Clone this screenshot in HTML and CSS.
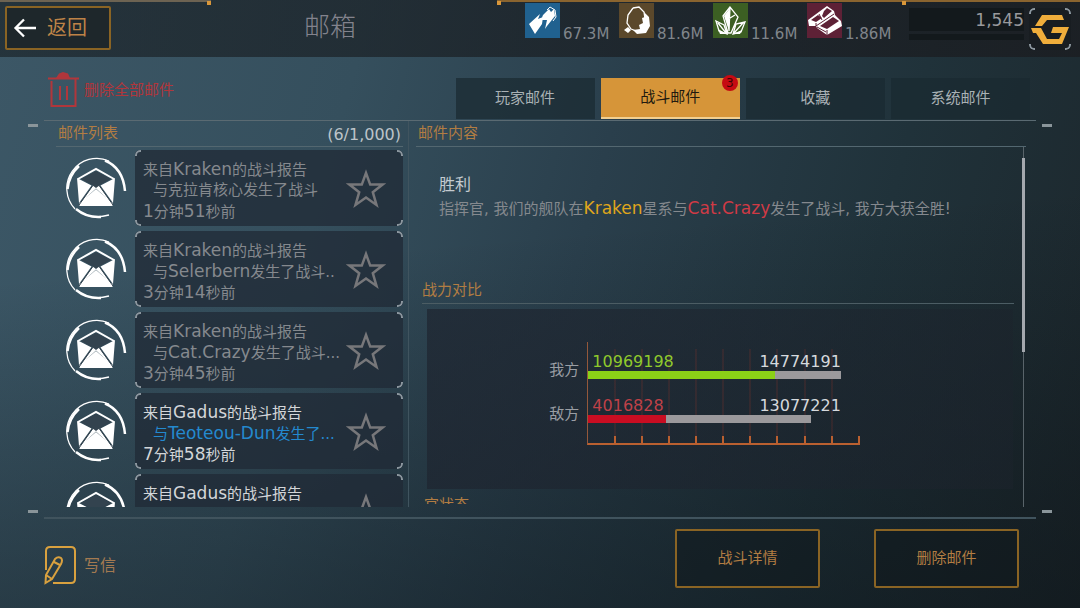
FILE: index.html
```html
<!DOCTYPE html>
<html lang="zh-CN">
<head>
  <meta charset="UTF-8">
  <meta name="viewport" content="width=device-width, initial-scale=1.0">
  <title>邮箱</title>
  <link rel="stylesheet" href="styles.css">
</head>
<body>
  <!-- Shared icons -->
  <svg class="sprite" width="0" height="0" aria-hidden="true">
    <symbol id="icon-mail" viewBox="0 0 62 62">
      <path d="M44 4A30 30 0 0 0 10 52M14 54Q26 63 44 58" fill="none" stroke="currentColor" stroke-width="1.300"/>
      <path d="M40 3.500Q58 11 60 34" fill="none" stroke="currentColor" stroke-width="2.500"/>
      <path d="M14 9Q4 18 2.500 32M11 52Q22 61 36 60" fill="none" stroke="currentColor" stroke-width="2.500"/>
      <path d="M13 22L31 12L49 22" fill="none" stroke="currentColor" stroke-width="2"/>
      <path d="M12 21L26.500 28.500L14 46ZM50 21L35.500 28.500L48 46ZM31 32L47.500 46V49H14.500V46ZM28 28.500H34L45 44L31 31.500L17 44Z" fill="currentColor"/>
      <path d="M14 48L27.500 29M48 48L34.500 29" stroke="#33434f" stroke-width="1"/>
      <path d="M16 22L31 14L46 22L35 28L31 31L27 28Z" fill="#33434f"/>
    </symbol>
    <symbol id="icon-star" viewBox="0 0 40 40">
      <path d="M20 4L24.200 15.600H36.500L26.800 23.200L30.500 36L20 28.500L9.500 36L13.200 23.200L3.500 15.600H15.800Z" fill="none" stroke="currentColor" stroke-width="2.500"/>
    </symbol>
  </svg>

  <!-- Top decoration -->
  <div class="top-line">
    <span class="seg seg-left"></span>
    <span class="seg seg-mid"></span>
    <span class="seg seg-right"></span>
  </div>

  <!-- Header -->
  <header class="header">
    <button class="back-btn">
      <svg width="24" height="20" viewBox="0 0 24 20" fill="none" stroke="#fff" stroke-width="2.300"><path d="M11 1.500L2.500 10L11 18.500M2 10H23"/></svg>
      返回
    </button>
    <h1 class="title">邮箱</h1>

    <ul class="resources">
      <li class="resource">
        <svg class="energy" viewBox="0 0 35 35">
          <path d="M4 21L15 11L13 16L18 14L17 21L10 31ZM18 12L24 6L26 9L29 6L30 13L22 23L20 26L22 17H16Z" fill="#fff"/>
          <path d="M22 7L25 4L30 7L31 14L28 18" fill="none" stroke="#fff"/>
        </svg>
        <span>67.3M</span>
      </li>
      <li class="resource">
        <svg class="ore" viewBox="0 0 35 35">
          <path d="M14 5L20 4L25 9L26 16M12 26L8 20L9 12L14 5M12 26L20 29" fill="none" stroke="#fff" stroke-width="1.300"/>
          <path d="M25 9L30 14L31 23L27 30L18 31L14 27L21 26L20 22L24 20L23 15L26 14ZM5 27L9 24L12 27L9 30Z" fill="#fff"/>
        </svg>
        <span>81.6M</span>
      </li>
      <li class="resource">
        <svg class="crystal" viewBox="0 0 35 35">
          <path d="M17 4L10 13L15 30H18L25 14ZM17 4L16 28M12 13L17 15L22 12M3 18L11 22L14 31L6 28ZM32 19L23 21L20 31L28 29ZM5 20L13 30M30 20L21 30" fill="none" stroke="#fff" stroke-width="1.300"/>
          <path d="M17 5L11 13L16 28ZM5 26L14 31H7ZM29 27L20 31H27Z" fill="#fff"/>
        </svg>
        <span>11.6M</span>
      </li>
      <li class="resource">
        <svg class="alloy" viewBox="0 0 35 35">
          <path d="M1 17L20 3L27 8L28 12L34 18L35 23L20 32L10 25L9 23L2 23Z" fill="#fff"/>
          <path d="M4 17L11 12L15 15L9 19ZM17 8L20 5L25 8L17 15L15 13ZM13 23L26 14L32 18L20 26Z" fill="#5e2136"/>
          <path d="M9 20V23L27 11M20 27V32M12 11L15 17M10 24L19 29" fill="none" stroke="#5e2136" stroke-width="1"/>
        </svg>
        <span>1.86M</span>
      </li>
    </ul>

    <div class="gold">
      <span class="gold-value">1,545</span>
      <span class="gold-track"></span>
    </div>
    <button class="gold-btn brackets" aria-label="金币">
      <svg width="42" height="42" viewBox="0 0 42 42" fill="#efad3b"><path d="M6 18L13 7H33L35 12H18L13 18ZM2 20H12L18 31H30L33 25H22L24 19H40L33 36H14L7 25H4Z"/></svg>
    </button>
  </header>

  <main class="mailbox">
    <!-- Delete all + tabs -->
    <div class="toolbar">
      <button class="delete-all">
        <svg width="32" height="38" viewBox="0 0 32 38" fill="none" stroke="currentColor" stroke-width="2"><path d="M0 7.500H31M3.500 10V35H27.500V8M12 15V29M19 15V29"/><path d="M8 7L11 2.500L15 1L20 2.500L22 7Z" fill="currentColor" stroke="none"/></svg>
        删除全部邮件
      </button>
      <nav class="tabs">
        <button class="tab">玩家邮件</button>
        <button class="tab active">战斗邮件<span class="badge">3</span></button>
        <button class="tab">收藏</button>
        <button class="tab">系统邮件</button>
      </nav>
    </div>

    <div class="frame">
      <div class="marks"><i></i><i></i></div>

      <!-- Mail list -->
      <section class="list-panel">
        <div class="panel-head">
          <h2>邮件列表</h2>
          <span class="count">(6/1,000)</span>
        </div>
        <ul class="mail-list">
          <li class="mail">
            <svg class="mail-icon"><use href="#icon-mail"/></svg>
            <div class="card brackets">
              <a class="card-text" href="#">
                <span>来自<b>Kraken</b>的战斗报告</span>
                <span class="sub">与克拉肯核心发生了战斗</span>
                <span><b>1</b>分钟<b>51</b>秒前</span>
              </a>
              <button class="star" aria-label="收藏"><svg width="40" height="40"><use href="#icon-star"/></svg></button>
            </div>
          </li>
          <li class="mail">
            <svg class="mail-icon"><use href="#icon-mail"/></svg>
            <div class="card brackets">
              <a class="card-text" href="#">
                <span>来自<b>Kraken</b>的战斗报告</span>
                <span class="sub">与<b>Selerbern</b>发生了战斗..</span>
                <span><b>3</b>分钟<b>14</b>秒前</span>
              </a>
              <button class="star" aria-label="收藏"><svg width="40" height="40"><use href="#icon-star"/></svg></button>
            </div>
          </li>
          <li class="mail">
            <svg class="mail-icon"><use href="#icon-mail"/></svg>
            <div class="card brackets">
              <a class="card-text" href="#">
                <span>来自<b>Kraken</b>的战斗报告</span>
                <span class="sub">与<b>Cat.Crazy</b>发生了战斗...</span>
                <span><b>3</b>分钟<b>45</b>秒前</span>
              </a>
              <button class="star" aria-label="收藏"><svg width="40" height="40"><use href="#icon-star"/></svg></button>
            </div>
          </li>
          <li class="mail unread">
            <svg class="mail-icon"><use href="#icon-mail"/></svg>
            <div class="card brackets">
              <a class="card-text" href="#">
                <span>来自<b>Gadus</b>的战斗报告</span>
                <span class="sub">与<b>Teoteou-Dun</b>发生了...</span>
                <span><b>7</b>分钟<b>58</b>秒前</span>
              </a>
              <button class="star" aria-label="收藏"><svg width="40" height="40"><use href="#icon-star"/></svg></button>
            </div>
          </li>
          <li class="mail unread">
            <svg class="mail-icon"><use href="#icon-mail"/></svg>
            <div class="card brackets">
              <a class="card-text" href="#">
                <span>来自<b>Gadus</b>的战斗报告</span>
              </a>
              <button class="star" aria-label="收藏"><svg width="40" height="40"><use href="#icon-star"/></svg></button>
            </div>
          </li>
        </ul>
      </section>

      <!-- Mail content -->
      <section class="content-panel">
        <div class="panel-head">
          <h2>邮件内容</h2>
        </div>
        <div class="content-row">
          <div class="content">
            <article class="report">
              <h3>胜利</h3>
              <p>指挥官, 我们的舰队在<b class="place">Kraken</b>星系与<b class="foe">Cat.Crazy</b>发生了战斗, 我方大获全胜!</p>
            </article>
            <h2 class="section-title">战力对比</h2>
            <div class="chart">
              <div class="chart-labels">
                <span>我方</span>
                <span>敌方</span>
              </div>
              <div class="plot">
                <div class="bar-row ours">
                  <div class="values"><span>10969198</span><span>14774191</span></div>
                  <div class="bar" style="width: 93%"><i style="width: 74%"></i></div>
                </div>
                <div class="bar-row enemy">
                  <div class="values"><span>4016828</span><span>13077221</span></div>
                  <div class="bar" style="width: 82%"><i style="width: 35%"></i></div>
                </div>
                <div class="ticks"><i></i><i></i><i></i><i></i><i></i><i></i><i></i><i></i><i></i><i></i></div>
              </div>
            </div>
            <h2 class="section-next">官状态</h2>
          </div>
          <div class="scrollbar"><div class="thumb"></div></div>
        </div>
      </section>

      <div class="marks"><i></i><i></i></div>
    </div>

    <!-- Bottom actions -->
    <footer class="footer">
      <button class="write-btn">
        <svg width="34" height="40" viewBox="0 0 34 40" fill="none" stroke="#d9a13f" stroke-width="2"><path d="M2 25V6Q2 2 6 2H27Q31 2 31 6V34Q31 38 27 38H9"/><path d="M1.500 38L2 30L11 14Q14 11 17 13Q19 15 17 19L8 34ZM10 17L16 20M2 30L8 34"/></svg>
        写信
      </button>
      <div class="actions">
        <button class="action-btn">战斗详情</button>
        <button class="action-btn">删除邮件</button>
      </div>
    </footer>
  </main>
</body>
</html>
```
FILE: styles.css
```css
/* General Styling */
* {
  box-sizing: border-box;
}

body {
  margin: 0;
  height: 100vh;
  display: flex;
  flex-direction: column;
  overflow: hidden;
  font-family: "DejaVu Sans", "Noto Sans CJK SC", sans-serif;
  font-size: 15px;
  line-height: 21px;
  color: #85898e;
  background: linear-gradient(175deg, rgba(8, 14, 18, 0) 40%, rgba(8, 14, 18, 0.45)), linear-gradient(105deg, #3c5766 0%, #354f5d 30%, #2a3f4c 52%, #20323a 76%, #1c262b 100%);
}

h1, h2, h3, p, ul {
  margin: 0;
  padding: 0;
  font-weight: normal;
  list-style: none;
}

/* Names and numbers, set a little larger than the Chinese text */
b {
  font-size: 17px;
  font-weight: normal;
  line-height: 20px;
}

button {
  font: inherit;
  color: inherit;
  background: none;
  border: none;
  padding: 0;
  cursor: pointer;
}

a {
  color: inherit;
  text-decoration: none;
}

svg {
  display: block;
  flex: none;
}

.sprite {
  position: absolute;
}

/* Corner brackets */
.brackets {
  position: relative;
}

.brackets::before {
  content: "";
  position: absolute;
  inset: 0;
  border: 2px solid #8b969e;
  border-radius: 5px;
  pointer-events: none;
  -webkit-mask: linear-gradient(#000 0 0) 0 0 / 6px 6px no-repeat, linear-gradient(#000 0 0) 100% 0 / 6px 6px no-repeat, linear-gradient(#000 0 0) 0 100% / 6px 6px no-repeat, linear-gradient(#000 0 0) 100% 100% / 6px 6px no-repeat;
}

/* Top decoration */
.top-line {
  display: flex;
  height: 4px;
  margin-bottom: -4px;
  z-index: 1;
}

.seg {
  border-top: 2px solid #8a642f;
  display: flex;
}

.seg::before, .seg-left::after {
  content: "";
  width: 4px;
  height: 4px;
  margin-top: -1px;
  background: #d9973a;
}

.seg-left {
  width: 19.5%;
  margin-right: 26.5%;
  border-color: #6d6352;
  justify-content: flex-end;
}

.seg-left::before {
  display: none;
}

.seg-mid {
  width: 37.5%;
}

.seg-right {
  flex: 1;
}

/* Header */
.header {
  display: flex;
  align-items: flex-start;
  height: 57px;
  padding: 3px 9px 0 5px;
  background: linear-gradient(90deg, rgba(22, 28, 32, 0.6), rgba(27, 28, 32, 0.75));
}

.back-btn {
  display: flex;
  align-items: center;
  gap: 10px;
  width: 106px;
  height: 44px;
  margin-top: 3px;
  padding-left: 6px;
  border: 2px solid #8a6424;
  border-radius: 2px;
  background: #1e272b;
  color: #bd8347;
  font-size: 20px;
}

.title {
  flex: 1;
  padding-left: 24px;
  text-align: center;
  font-size: 26px;
  font-weight: 300;
  line-height: 48px;
  color: #83838d;
}

.resources {
  display: flex;
  margin-right: 8px;
}

.resource {
  display: flex;
  align-items: flex-end;
  gap: 3px;
  width: 94px;
  color: #80858b;
}

.resource svg {
  width: 35px;
  height: 35px;
}

.resource span {
  line-height: 17px;
  margin-bottom: -5px;
}

.energy {
  background: #20618f;
}

.ore {
  background: #5b482b;
}

.crystal {
  background: #3c5f23;
}

.alloy {
  background: #5e2136;
}

.gold {
  display: flex;
  flex-direction: column;
  gap: 3px;
  width: 115px;
  margin-top: 5px;
}

.gold-value {
  height: 23px;
  background: #13191c;
  color: #999a9d;
  font-size: 17px;
  line-height: 24px;
  text-align: right;
}

.gold-track {
  height: 6px;
  background: #13191c;
}

.gold-btn {
  width: 42px;
  height: 42px;
  margin: 5px 0 0 5px;
  background: #181d21;
}

/* Mailbox */
.mailbox {
  flex: 1;
  min-height: 0;
  display: flex;
  flex-direction: column;
  padding: 0 28px;
}

.toolbar {
  display: flex;
  justify-content: space-between;
  align-items: flex-end;
  height: 63px;
  padding: 0 22px 1px 20px;
}

.delete-all {
  display: flex;
  align-items: center;
  gap: 4px;
  height: 58px;
  color: #b1363b;
}

.tabs {
  display: flex;
  gap: 6px;
  width: 58.500%;
}

.tab {
  position: relative;
  flex: 1;
  height: 41px;
  background: rgba(25, 42, 49, 0.7);
  color: #a9b1b5;
}

.tab.active {
  background: #d69539;
  color: #21190f;
  border-bottom: 2px solid #f1cf91;
}

.badge {
  position: absolute;
  top: -3px;
  right: 2px;
  width: 16px;
  height: 16px;
  border-radius: 50%;
  background: #c60a12;
  color: #3b0505;
  font-size: 12px;
  line-height: 16px;
}

/* Framed area */
.frame {
  flex: 1;
  min-height: 0;
  display: grid;
  grid-template-columns: 353px 1fr;
  grid-template-rows: 0 minmax(0, 1fr) 0;
  margin: 0 16px;
  padding: 0 10px 10px 12px;
  border-top: 1px solid #5a6a72;
  border-bottom: 2px solid #40535d;
}

.marks {
  grid-column: 1 / 3;
  display: flex;
  justify-content: space-between;
  margin: 0 -26px 0 -28px;
  align-items: center;
}

.marks i {
  width: 10px;
  height: 3px;
  flex: none;
  background: #8a959a;
}

.marks:first-child {
  padding-top: 4px;
}

.marks:last-child {
  padding-top: 4px;
}

.list-panel, .content-panel {
  display: flex;
  flex-direction: column;
  min-height: 0;
}

.list-panel {
  padding-right: 5px;
  border-right: 1px solid #40545f;
}

.content-panel {
  padding-left: 7px;
}

.panel-head {
  display: flex;
  justify-content: space-between;
  height: 26px;
  padding: 2px 2px 0;
  border-bottom: 1px solid #536770;
}

.panel-head h2 {
  font-size: 15px;
  color: #b27d43;
}

.count {
  color: #bdc4c9;
  font-size: 16px;
  line-height: 23px;
}

/* Mail list */
.mail-list {
  flex: 1;
  min-height: 0;
  display: flex;
  flex-direction: column;
  gap: 5px;
  padding: 3px 0 0 9px;
  overflow: hidden;
}

.mail {
  display: flex;
  flex: none;
  align-items: center;
  gap: 8px;
  height: 76px;
}

.mail-icon {
  width: 62px;
  height: 62px;
  color: #fff;
}

.card {
  flex: 1;
  height: 100%;
  display: flex;
  justify-content: space-between;
  padding: 9px 17px 0 8px;
  border-radius: 5px;
  background: rgba(32, 41, 53, 0.75);
}

.card-text {
  display: flex;
  flex-direction: column;
  white-space: nowrap;
}

.card-text span {
  height: 21px;
}

.card-text .sub {
  padding-left: 10px;
}

.unread {
  color: #d3d6d9;
}

.unread .sub {
  color: #2489cf;
}

.star {
  height: 60px;
  margin-left: -20px;
  color: #77777a;
}

/* Mail content */
.content-row {
  flex: 1;
  min-height: 0;
  display: flex;
  justify-content: space-between;
}

.content {
  flex: 1;
  min-height: 0;
  margin: 0 8px 3px 6px;
  overflow: hidden;
}

.report {
  height: 132px;
  padding: 26px 0 0 17px;
  white-space: nowrap;
}

.report h3 {
  font-size: 16px;
  line-height: 24px;
  color: #c4cbd0;
}

.report p {
  line-height: 25px;
}

.place {
  color: #dfa51c;
}

.foe {
  color: #d03a45;
}

.section-title {
  height: 25px;
  font-size: 15px;
  line-height: 23px;
  color: #b27d43;
  border-bottom: 1px solid #4c5d64;
}

/* Chart */
.chart {
  display: grid;
  grid-template-columns: 26% 46.500%;
  column-gap: 8px;
  height: 180px;
  margin: 5px 1px 0 5px;
  padding-top: 33px;
  background: linear-gradient(90deg, rgba(30, 37, 48, 0.72), rgba(28, 35, 44, 0.5));
}

.chart-labels {
  display: flex;
  flex-direction: column;
  padding-top: 18px;
  gap: 23px;
  text-align: right;
  color: #9a9ea4;
}

.plot {
  height: 103px;
  display: flex;
  flex-direction: column;
  border-left: 1px solid #94583b;
  border-bottom: 2px solid #ba6030;
  padding-top: 11px;
}

.bar-row {
  position: relative;
  z-index: 1;
  height: 44px;
}

.values {
  display: flex;
  justify-content: space-between;
  width: 93%;
  padding-left: 4px;
  font-size: 16px;
  line-height: 18px;
  color: #d5d9dd;
}

.bar {
  height: 8px;
  background: #9b999c;
}

.bar i {
  display: block;
  height: 100%;
}

.ours .values span:first-child {
  color: #90c92c;
}

.ours .bar i {
  background: #8bd117;
}

.enemy .values span:first-child {
  color: #bf4148;
}

.enemy .bar i {
  background: #c90d22;
}

/* Axis ticks with faint grid lines above them */
.ticks {
  flex: none;
  display: flex;
  height: 94px;
  margin-top: -92px;
}

.ticks i {
  flex: 1;
  border-right: 2px solid;
  border-image: linear-gradient(rgba(140, 50, 40, 0.2) 92%, #ba6030 92%) 1;
}

.ticks i:last-child {
  border-image: linear-gradient(transparent 92%, #ba6030 92%) 1;
}

.section-next {
  padding-left: 2px;
  margin-top: 6px;
  font-size: 15px;
  line-height: 21px;
  color: #b27d43;
}

/* Scrollbar */
.scrollbar {
  display: flex;
  justify-content: center;
  width: 3px;
  margin-right: 1px;
  background: linear-gradient(#59646a, #59646a) center / 1px 100% no-repeat;
}

.thumb {
  width: 3px;
  height: 54%;
  margin-top: 11px;
  background: #a4a8ae;
}

/* Bottom actions */
.footer {
  display: flex;
  justify-content: space-between;
  height: 89px;
  padding: 10px 33px 0 16px;
}

.write-btn {
  display: flex;
  align-items: center;
  gap: 6px;
  height: 72px;
  color: #a47a51;
  font-size: 16px;
}

.actions {
  display: flex;
  gap: 54px;
}

.action-btn {
  width: 145px;
  height: 59px;
  border: 2px solid #8a6424;
  border-radius: 2px;
  background: rgba(16, 24, 28, 0.5);
  color: #b27d43;
}
```
